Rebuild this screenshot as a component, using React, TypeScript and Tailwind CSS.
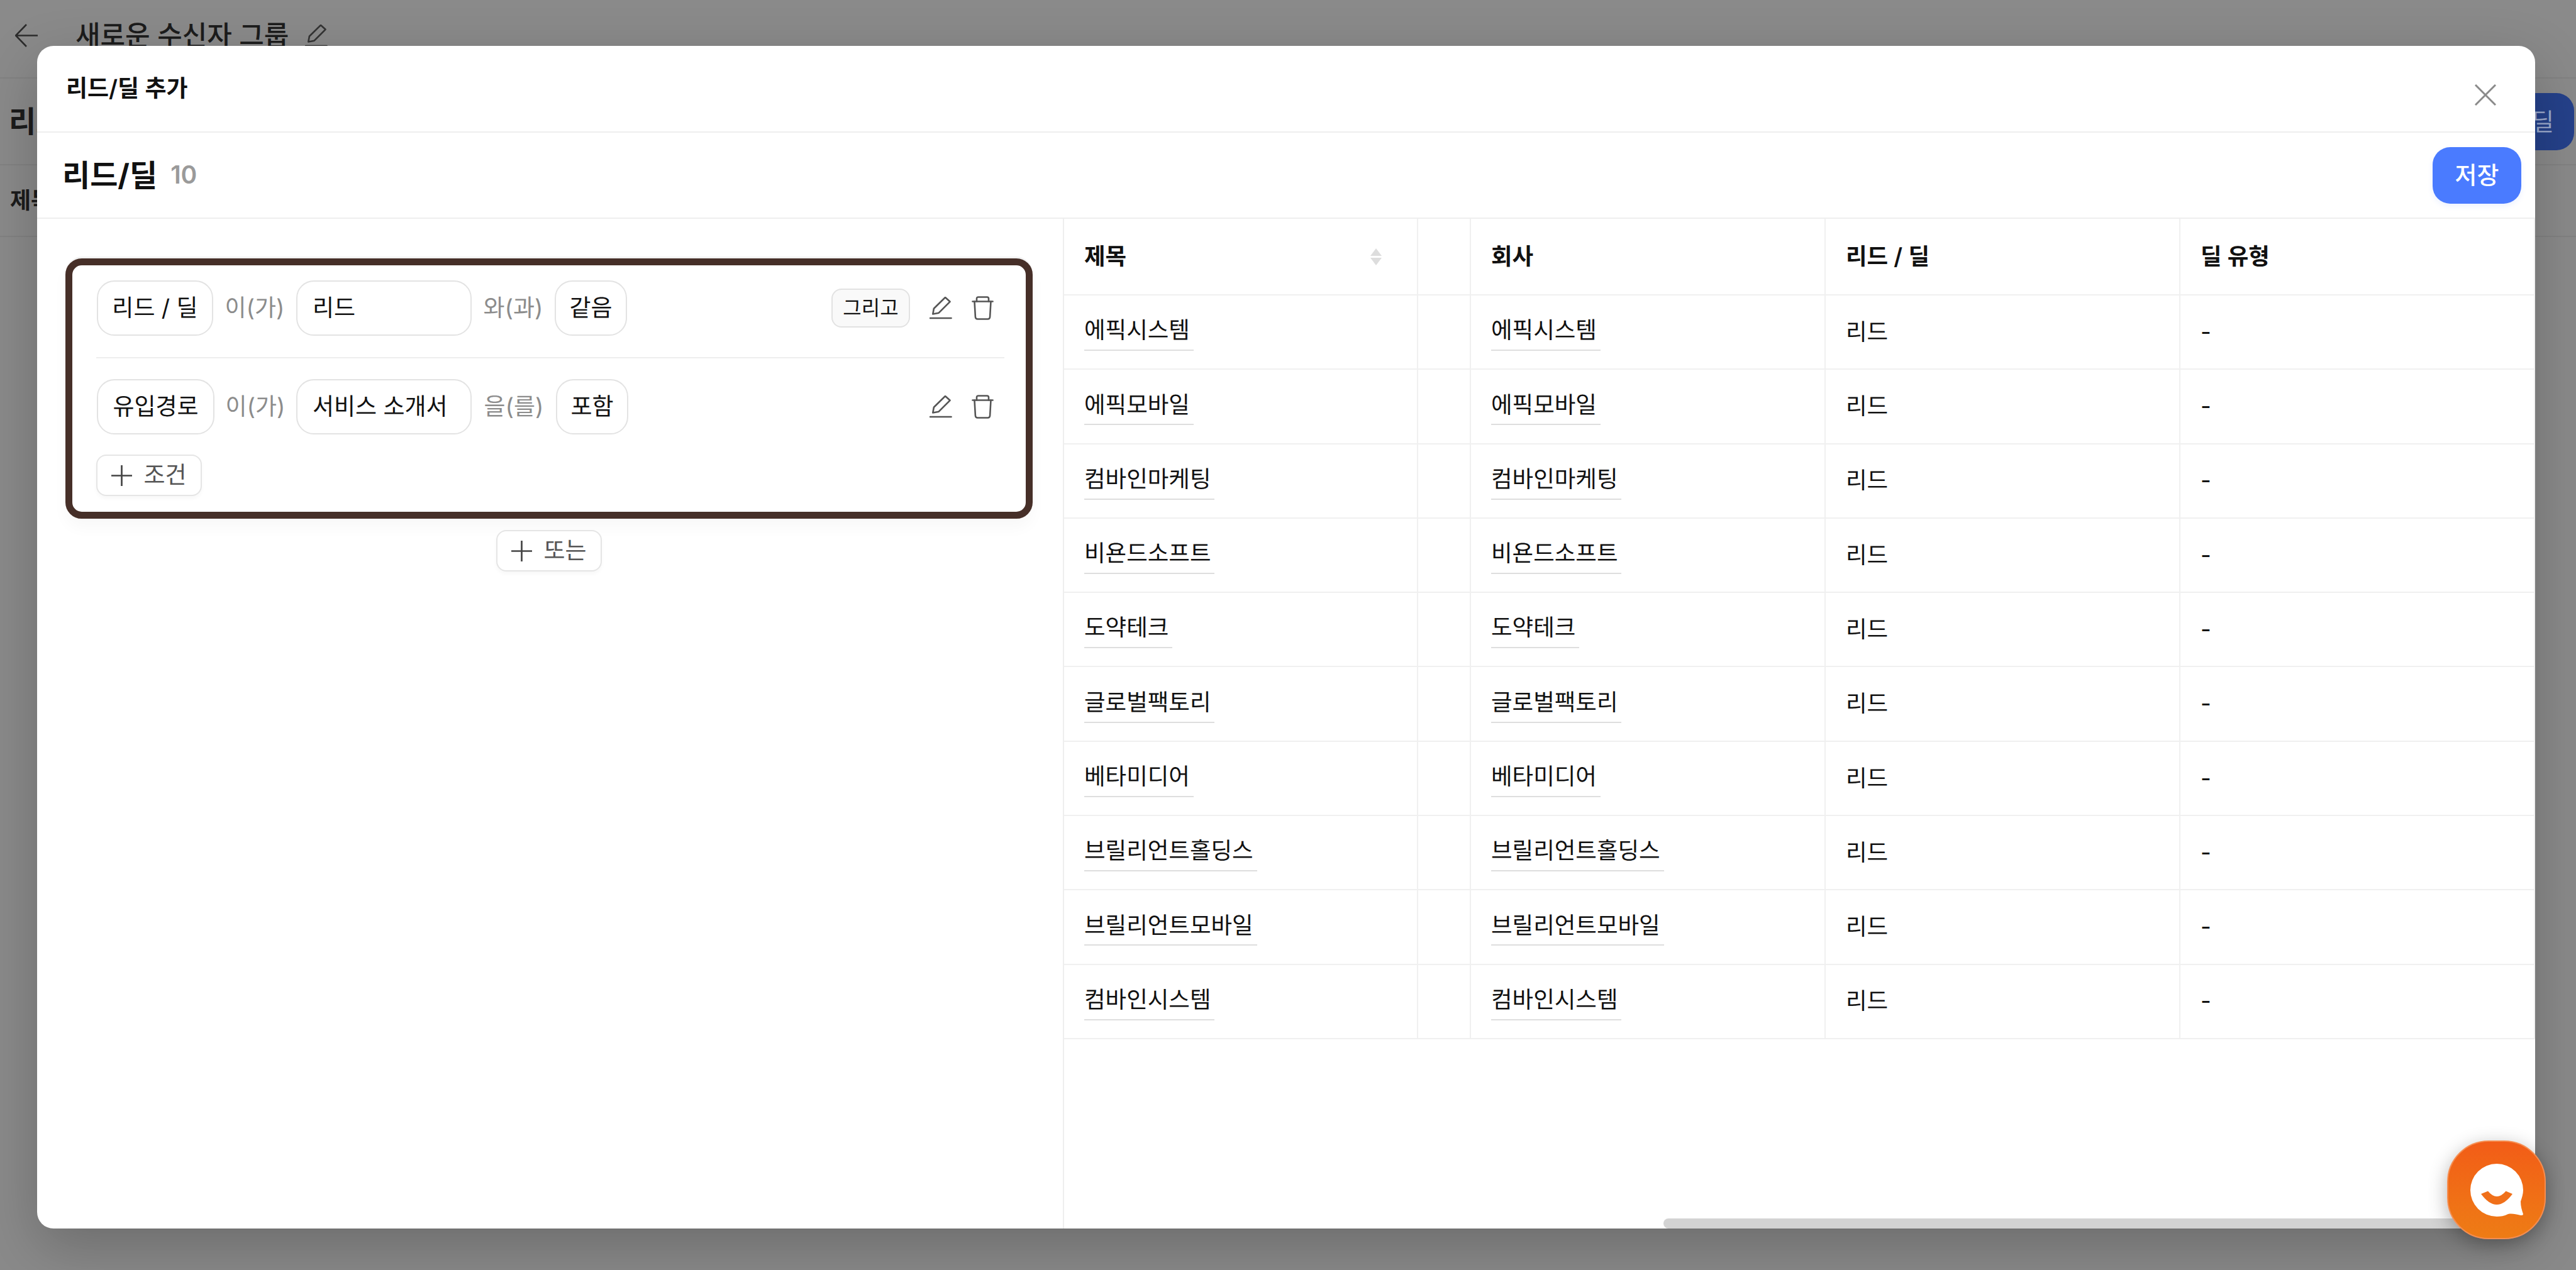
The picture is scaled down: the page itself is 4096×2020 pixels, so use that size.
const ROWS = [
  "에픽시스템",
  "에픽모바일",
  "컴바인마케팅",
  "비욘드소프트",
  "도약테크",
  "글로벌팩토리",
  "베타미디어",
  "브릴리언트홀딩스",
  "브릴리언트모바일",
  "컴바인시스템",
];

function PencilIcon({ className = "" }: { className?: string }) {
  return (
    <svg viewBox="0 0 36 36" fill="none" stroke="currentColor" strokeWidth="2.6" strokeLinejoin="round" strokeLinecap="round" className={className}>
      <path d="M5.3 27.5L6.9 18.8L25 1L32.5 7.8L14.7 25.7Z" />
      <path d="M1 34H34.5" />
    </svg>
  );
}

function TrashIcon({ className = "" }: { className?: string }) {
  return (
    <svg viewBox="0 0 34 38" fill="none" stroke="currentColor" strokeWidth="2.6" strokeLinejoin="round" strokeLinecap="round" className={className}>
      <path d="M1 8.5H33" />
      <path d="M7.5 8.5V4Q7.5 1.5 10 1.5H24Q26.5 1.5 26.5 4V8.5" />
      <path d="M4 8.5L5.4 33Q5.6 36.5 9 36.5H25Q28.4 36.5 28.6 33L30 8.5" />
    </svg>
  );
}

function PlusIcon() {
  return (
    <svg viewBox="0 0 32 32" stroke="currentColor" strokeWidth="2.6" className="h-[33px] w-[33px] text-[#444]">
      <path d="M16 0V32M0 16H32" />
    </svg>
  );
}

function Pill({ children, className = "" }: { children: React.ReactNode; className?: string }) {
  return (
    <div className={`flex h-[88px] items-center rounded-[28px] border-2 border-[#e3e3e3] bg-white text-[37px] text-[#111] ${className}`}>
      {children}
    </div>
  );
}

function AddButton({ label }: { label: string }) {
  return (
    <button className="flex h-[66px] w-[168px] items-center justify-center gap-[18px] rounded-[16px] border-2 border-[#e5e5e5] bg-white text-[37px] text-[#555] shadow-[0_4px_6px_rgba(0,0,0,0.03)]">
      <PlusIcon />
      {label}
    </button>
  );
}

function ConditionRow({
  field,
  fieldClass,
  joinClass,
  value,
  suffix,
  suffixClass,
  op,
  and,
}: {
  field: string;
  fieldClass: string;
  joinClass: string;
  value: string;
  suffix: string;
  suffixClass: string;
  op: string;
  and?: boolean;
}) {
  return (
    <div className="flex items-center pl-[1px] pr-[17px]">
      <Pill className={`justify-center ${fieldClass}`}>{field}</Pill>
      <span className={`text-center text-[37px] text-[#8c8c8c] ${joinClass}`}>이(가)</span>
      <Pill className="w-[279px] pl-[24px]">{value}</Pill>
      <span className={`text-center text-[37px] text-[#8c8c8c] ${suffixClass}`}>{suffix}</span>
      <Pill className="w-[115px] justify-center">{op}</Pill>
      <div className="ml-auto flex items-center gap-[31px] text-[#555]">
        {and && (
          <span className="flex h-[62px] w-[125px] items-center justify-center rounded-[16px] border-2 border-[#e2e2e2] bg-[#f9f9f9] text-[32px] text-[#111]">
            그리고
          </span>
        )}
        <PencilIcon className="h-[36px] w-[36px]" />
        <TrashIcon className="h-[38px] w-[35px]" />
      </div>
    </div>
  );
}

function Cell({ className, children }: { className: string; children?: React.ReactNode }) {
  return <div className={`flex shrink-0 items-center border-r-2 border-[#f0f0f0] pl-[32px] ${className}`}>{children}</div>;
}

function LeadTable() {
  return (
    <div className="w-[3200px] text-[36.5px] text-[#111]">
      <div className="flex h-[122px] border-b-2 border-[#f0f0f0] font-semibold">
        <Cell className="w-[563px] justify-between pr-[56px]">
          제목
          <svg viewBox="0 0 18 27" fill="#dddddd" className="h-[27px] w-[18px]">
            <path d="M9 0L18 12H0Z" />
            <path d="M0 15H18L9 27Z" />
          </svg>
        </Cell>
        <Cell className="w-[84px]" />
        <Cell className="w-[564px]">회사</Cell>
        <Cell className="w-[564px]">리드 / 딜</Cell>
        <Cell className="w-[564px]">딜 유형</Cell>
      </div>
      {ROWS.map((name) => (
        <div key={name} className="flex h-[118.3px] border-b-2 border-[#f0f0f0]">
          <Cell className="w-[563px]">
            <span className="border-b-2 border-[#dedede] pb-[3px] pr-[6px]">{name}</span>
          </Cell>
          <Cell className="w-[84px]" />
          <Cell className="w-[564px]">
            <span className="border-b-2 border-[#dedede] pb-[3px] pr-[6px]">{name}</span>
          </Cell>
          <Cell className="w-[564px]">리드</Cell>
          <Cell className="w-[564px]">-</Cell>
        </div>
      ))}
    </div>
  );
}

export default function App() {
  return (
    <div className="relative h-[2020px] w-[4096px] overflow-hidden bg-[#8a8a8a] font-['Inter','Noto_Sans_CJK_KR',sans-serif] text-[#1c1c1c]">
      {/* page behind the dialog */}
      <div className="flex h-[125px] items-center gap-[60px] border-b-2 border-[#828282] pb-[10px] pl-[24px]">
        <svg viewBox="0 0 36 37" fill="none" stroke="currentColor" strokeWidth="2.6" className="h-[37px] w-[36px] text-[#2c2c2c]">
          <path d="M18 1L1 18.5L18 36M1 18.5H36" />
        </svg>
        <div className="flex items-center gap-[26px]">
          <span className="text-[43px] font-medium">새로운 수신자 그룹</span>
          <PencilIcon className="h-[36px] w-[36px] text-[#333]" />
        </div>
      </div>
      <div className="flex h-[138px] items-center justify-between border-b-2 border-[#828282] pl-[14px] pr-[3px]">
        <span className="text-[47px] font-bold">리드/딜</span>
        <span className="flex h-[91px] items-center rounded-[28px] bg-[#25418a] px-[32px] text-[38px] text-[#9aa8cc]">리드/딜</span>
      </div>
      <div className="flex h-[114px] items-center border-b-2 border-[#828282] pl-[16px] text-[36px] font-semibold">제목</div>

      {/* dialog */}
      <div className="absolute left-[59px] top-[73px] flex h-[1881px] w-[3972px] flex-col overflow-hidden rounded-[26px] bg-white shadow-[0_30px_90px_rgba(0,0,0,0.22)]">
        <div className="flex h-[138px] shrink-0 items-center justify-between border-b-2 border-[#eeeeee] pl-[46px] pr-[62px]">
          <span className="text-[37px] font-semibold text-[#111]">리드/딜 추가</span>
          <svg viewBox="0 0 34 34" fill="none" stroke="#8a8a8a" strokeWidth="3" className="mt-[20px] h-[34px] w-[34px]">
            <path d="M1 1L33 33M33 1L1 33" />
          </svg>
        </div>
        <div className="flex h-[137px] shrink-0 items-center justify-between border-b-2 border-[#eeeeee] pl-[40px] pr-[22px]">
          <div className="flex items-center gap-[21px]">
            <span className="text-[48px] font-bold text-[#111]">리드/딜</span>
            <span className="text-[39px] font-semibold text-[#9a9a9a]">10</span>
          </div>
          <button className="h-[90px] w-[141px] rounded-[28px] bg-[#4a7bff] text-[38px] font-medium text-white shadow-[0_4px_8px_rgba(74,123,255,0.1)]">저장</button>
        </div>

        <div className="flex min-h-0 flex-1">
          <div className="w-[1633px] shrink-0 border-r-2 border-[#eeeeee] pl-[45px] pr-[48px] pt-[63px]">
            <div className="flex h-[414px] flex-col rounded-[26px] border-[11px] border-[#462f28] bg-white pl-[38px] pr-[34px] pt-[24px] shadow-[0_-4px_0_-1px_#f2f2f2,0_14px_24px_rgba(0,0,0,0.03)]">
              <ConditionRow
                field="리드 / 딜"
                fieldClass="w-[185px]"
                joinClass="w-[132px]"
                value="리드"
                suffix="와(과)"
                suffixClass="w-[132px]"
                op="같음"
                and
              />
              <div className="mb-[33px] mt-[34px] h-[2px] bg-[#eeeeee]" />
              <ConditionRow
                field="유입경로"
                fieldClass="w-[187px]"
                joinClass="w-[130px]"
                value="서비스 소개서"
                suffix="을(를)"
                suffixClass="w-[134px]"
                op="포함"
              />
              <div className="mt-[32px]">
                <AddButton label="조건" />
              </div>
            </div>
            <div className="mt-[18px] flex justify-center">
              <AddButton label="또는" />
            </div>
          </div>
          <div className="relative min-w-0 flex-1 overflow-hidden">
            <LeadTable />
            <div className="absolute bottom-0 left-[953px] right-0 h-[16px] rounded-l-[8px] bg-[#d3d3d3]" />
          </div>
        </div>
      </div>

      {/* chat launcher */}
      <div className="absolute left-[3891px] top-[1814px] flex h-[157px] w-[157px] items-center justify-center rounded-[66px] border-2 border-[#f58d50] bg-linear-to-b from-[#f25c17] to-[#ee7c15] shadow-[0_8px_30px_rgba(0,0,0,0.3)]">
        <svg viewBox="0 0 84 84" className="h-[84px] w-[84px]">
          <path
            fill="#ffffff"
            d="M42 0A42 42 0 0 1 84 42C84 48 82 54 80 60C80 68 82 74 84 80C84 82 82 82 80 82C72 80 66 79 60 80C54 83 48 84 42 84A42 42 0 0 1 42 0Z"
          />
          <path fill="#f0701a" d="M17 48L28 43.5Q42 60.5 56.5 43.5L67 48Q42 82 17 48Z" />
        </svg>
      </div>
    </div>
  );
}
